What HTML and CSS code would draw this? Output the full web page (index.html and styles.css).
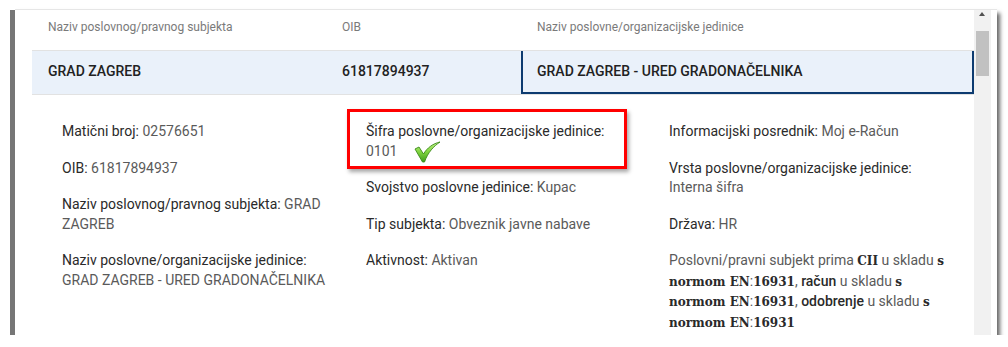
FILE: index.html
```html
<!DOCTYPE html>
<html>
<head>
  <title>Poslovni subjekti</title>
  <link rel="stylesheet" href="styles.css">
</head>
<body>
  <div class="frame">
    <div class="content">
      <div class="grid-head">
        <div class="th">Naziv poslovnog/pravnog subjekta</div>
        <div class="th">OIB</div>
        <div class="th">Naziv poslovne/organizacijske jedinice</div>
      </div>

      <div class="grid-row selected">
        <div class="td">GRAD ZAGREB</div>
        <div class="td">61817894937</div>
        <div class="td active">GRAD ZAGREB - URED GRADONAČELNIKA</div>
      </div>

      <div class="details">
        <div class="col">
          <p><span class="lbl">Matični broj:</span> 02576651</p>
          <p><span class="lbl">OIB:</span> 61817894937</p>
          <p><span class="lbl">Naziv poslovnog/pravnog subjekta:</span> GRAD ZAGREB</p>
          <p><span class="lbl">Naziv poslovne/organizacijske jedinice:</span> GRAD ZAGREB - URED GRADONAČELNIKA</p>
        </div>
        <div class="col">
          <p class="marked">
            <span class="lbl">Šifra poslovne/organizacijske jedinice:</span> 0101
            <svg class="check" width="27" height="22" viewBox="0 0 27 22">
              <defs>
                <linearGradient id="g" x1="0" y1="0" x2="0" y2="1">
                  <stop offset="0" stop-color="#c4f38c"/>
                  <stop offset="0.5" stop-color="#7fd43e"/>
                  <stop offset="1" stop-color="#3f9c1c"/>
                </linearGradient>
              </defs>
              <path d="M1 8 L5 6 L9.5 13 C13 7 19 2.5 26 1 C20 5 14 11 10.5 21 L8.5 21 Z" fill="url(#g)" stroke="#3b8a1a" stroke-width="0.9" stroke-linejoin="round"/>
            </svg>
          </p>
          <p><span class="lbl">Svojstvo poslovne jedinice:</span> Kupac</p>
          <p><span class="lbl">Tip subjekta:</span> Obveznik javne nabave</p>
          <p><span class="lbl">Aktivnost:</span> Aktivan</p>
        </div>
        <div class="col">
          <p><span class="lbl">Informacijski posrednik:</span> Moj e-Račun</p>
          <p><span class="lbl">Vrsta poslovne/organizacijske jedinice:</span> Interna šifra</p>
          <p><span class="lbl">Država:</span> HR</p>
          <p>Poslovni/pravni subjekt prima <span class="norm">CII</span> u skladu <span class="norm">s</span>
            <span class="norm">normom&nbsp;EN</span>:<span class="norm">16931</span>, <b>račun</b> u skladu <span class="norm">s</span>
            <span class="norm">normom&nbsp;EN</span>:<span class="norm">16931</span>, <b>odobrenje</b> u skladu <span class="norm">s</span>
            <span class="norm">normom&nbsp;EN</span>:<span class="norm">16931</span></p>
        </div>
      </div>
    </div>

    <div class="scrollbar">
      <span class="arrow"></span>
      <span class="thumb"></span>
    </div>
  </div>
</body>
</html>
```

FILE: styles.css
```css
body {
  font-family: Roboto, "Liberation Sans", sans-serif;
  background-color: #fff;
  margin: 0;
  padding: 0;
}

.frame {
  display: flex;
  width: 982px;
  height: 326px;
  margin: 9px 0 0 15px;
  padding-right: 6px;
  box-sizing: border-box;
  background-color: #fff;
  border-top: 1px solid #e6e6e6;
  box-shadow: -5px 1px 0 #767676, 3px 4px 4px rgba(0, 0, 0, 0.6);
  overflow: hidden;
}

.content {
  flex: 1;
  padding-left: 17px;
  overflow: hidden;
}

.grid-head,
.grid-row {
  display: grid;
  grid-template-columns: 294px 195px 1fr;
  border-bottom: 1px solid #e2e2e2;
}

.th {
  height: 40px;
  box-sizing: border-box;
  padding: 9px 16px 0;
  font-size: 12px;
  line-height: 16px;
  color: #7a7a7a;
}

.selected {
  background-color: #eaf1fa;
}

.td {
  height: 43px;
  box-sizing: border-box;
  padding: 10px 16px 0;
  font-size: 14px;
  line-height: 20px;
  font-weight: 500;
  color: #222;
}

.td.active {
  padding-left: 14px;
  border: 2px solid #0d3b70;
  border-top: none;
}

.details {
  display: grid;
  grid-template-columns: 271px 270px 1fr;
  column-gap: 33px;
  padding: 27px 26px 0 30px;
}

.col p {
  margin: 0 0 17px;
  font-size: 14px;
  line-height: 19.5px;
  color: #5a5a5a;
}

.lbl {
  color: #2a2a2a;
}

.col b {
  font-weight: 500;
  color: #2a2a2a;
}

.norm {
  font-family: "DejaVu Serif", "Liberation Serif", serif;
  font-size: 12px;
  font-weight: 700;
  color: #2a2a2a;
}

.marked {
  position: relative;
}

.marked::after {
  content: "";
  position: absolute;
  top: -13px;
  left: -19px;
  right: 9px;
  bottom: -8px;
  border: 3px solid #f00;
  box-shadow: 2px 3px 4px rgba(0, 0, 0, 0.35);
}

.check {
  position: absolute;
  left: 48px;
  top: 19px;
}

.scrollbar {
  position: relative;
  width: 17px;
  background-color: #f1f1f1;
}

.arrow {
  position: absolute;
  top: 2px;
  left: 5px;
  border-left: 3.5px solid transparent;
  border-right: 3.5px solid transparent;
  border-bottom: 4px solid #505050;
}

.thumb {
  position: absolute;
  top: 21px;
  left: 2px;
  width: 13px;
  height: 45px;
  background-color: #c1c1c1;
}
```
